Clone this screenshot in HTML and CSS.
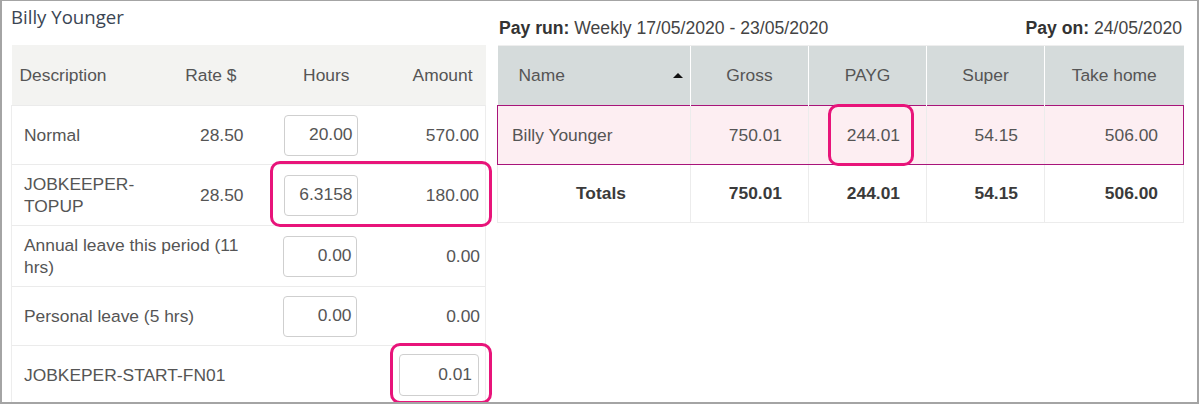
FILE: index.html
```html
<!DOCTYPE html>
<html>
<head>
<meta charset="utf-8">
<link rel="stylesheet" href="styles.css">
</head>
<body>
<div class="frame">
  <div class="left">
    <h1 class="title">Billy Younger</h1>
    <table class="earn">
      <colgroup><col class="c-desc"><col class="c-rate"><col class="c-hours"><col class="c-amt"></colgroup>
      <thead>
        <tr><th class="l">Description</th><th>Rate $</th><th>Hours</th><th>Amount</th></tr>
      </thead>
      <tbody>
        <tr><td class="l">Normal</td><td>28.50</td><td><input class="num" value="20.00"></td><td>570.00</td></tr>
        <tr class="two"><td class="l">JOBKEEPER-TOPUP</td><td>28.50</td><td><input class="num" value="6.3158"></td><td>180.00</td></tr>
        <tr class="two"><td class="l" colspan="2">Annual leave this period (11 hrs)</td><td><input class="num" value="0.00"></td><td>0.00</td></tr>
        <tr><td class="l" colspan="2">Personal leave (5 hrs)</td><td><input class="num" value="0.00"></td><td>0.00</td></tr>
        <tr><td class="l" colspan="3">JOBKEPER-START-FN01</td><td><input class="num wide" value="0.01"></td></tr>
      </tbody>
    </table>
  </div>
  <div class="right">
    <div class="payinfo">
      <span><b>Pay run:</b> Weekly 17/05/2020 - 23/05/2020</span>
      <span><b>Pay on:</b> 24/05/2020</span>
    </div>
    <table class="summary">
      <colgroup><col class="s-name"><col class="s-n"><col class="s-n"><col class="s-n"><col class="s-last"></colgroup>
      <thead>
        <tr><th class="name"><div class="namewrap"><span>Name</span><span class="sort"></span></div></th><th>Gross</th><th>PAYG</th><th>Super</th><th>Take home</th></tr>
      </thead>
      <tbody>
        <tr class="sel"><td class="name">Billy Younger</td><td>750.01</td><td>244.01</td><td>54.15</td><td>506.00</td></tr>
        <tr class="tot"><td class="name">Totals</td><td>750.01</td><td>244.01</td><td>54.15</td><td>506.00</td></tr>
      </tbody>
    </table>
  </div>
  <div class="mark m1"></div>
  <div class="mark m2"></div>
  <div class="mark m3"></div>
</div>
</body>
</html>
```
FILE: styles.css
```css
html, body { margin: 0; padding: 0; background: #fff; }
body { font-family: "Liberation Sans", Arial, sans-serif; font-size: 17.4px; color: #555; }

.frame {
  position: relative;
  width: 1199px;
  height: 404px;
  box-sizing: border-box;
  border: 2px solid #a4a4a4;
  border-top-width: 1px;
  padding: 0 14px 0 9px;
  display: flex;
  gap: 12px;
  overflow: hidden;
}

.left { width: 474px; flex: none; }
.right { width: 686px; flex: none; }

.title {
  margin: 0;
  height: 44px;
  box-sizing: border-box;
  padding-top: 4px;
  font-family: "Open Sans", sans-serif;
  font-weight: 400;
  font-size: 18.6px;
  line-height: 24px;
  color: #3a4553;
}

.earn {
  width: 474px;
  table-layout: fixed;
  border-collapse: collapse;
}
.c-desc { width: 159px; }
.c-rate { width: 79px; }
.c-hours { width: 113px; }
.c-amt { width: 123px; }

.earn th {
  height: 60px;
  padding: 0 13px 0 8px;
  background: #f3f3f1;
  font-weight: 400;
  text-align: right;
  color: #555;
}
.earn th.l { text-align: left; }
.earn td {
  height: 58px;
  padding: 0 6px 0 12px;
  text-align: right;
  border-top: 1px solid #ebebeb;
  line-height: 22px;
}
.earn td:nth-child(3) { padding-right: 5px; }
.earn td.l { text-align: left; border-left: 1px solid #ededed; }
.earn td:last-child { border-right: 1px solid #ededed; }
.earn tr.two td { height: 60px; }

.num {
  width: 74px;
  height: 41px;
  box-sizing: border-box;
  border: 1px solid #cfcfcf;
  border-radius: 4px;
  padding: 0 4px 2px;
  font-family: "Liberation Sans", Arial, sans-serif;
  font-size: 17.4px;
  color: #555;
  text-align: right;
  vertical-align: middle;
  background: #fff;
}
.num.wide { width: 80px; height: 42px; padding-right: 6px; }

.payinfo {
  height: 44px;
  box-sizing: border-box;
  padding: 17px 1px 0 2px;
  display: flex;
  justify-content: space-between;
  font-size: 17.6px;
  line-height: 20px;
  color: #444;
}
.payinfo b { color: #333; }

.summary {
  width: 686px;
  table-layout: fixed;
  border-collapse: collapse;
}
.s-name { width: 193px; }
.s-n { width: 118px; }
.s-last { width: 139px; }

.summary th {
  height: 59px;
  padding: 0;
  background: #d5dbdb;
  font-weight: 400;
  color: #555;
  text-align: center;
  border-left: 1px solid #fff;
  border-top: 1px solid #eee;
}
.summary th:first-child { border-left: 0; }
.namewrap {
  display: flex;
  align-items: center;
  justify-content: space-between;
  padding: 0 7px 0 21px;
}
.sort {
  width: 0;
  height: 0;
  border-left: 5px solid transparent;
  border-right: 5px solid transparent;
  border-bottom: 5px solid #111;
  margin-top: -1px;
}

.summary td {
  height: 58px;
  padding: 0 26px 0 0;
  text-align: right;
  border-left: 1px solid #ececec;
}
.summary td:first-child { border-left: 1px solid #ececec; }
.summary td:last-child { border-right: 1px solid #ececec; padding-right: 25px; }
.summary td.name { text-align: left; padding-left: 14px; }

.summary tr.sel td {
  background: #fdeef2;
  border-top: 1px solid #a8147a;
  border-bottom: 1px solid #a8147a;
}
.summary tr.sel td:first-child { border-left: 1px solid #a8147a; }
.summary tr.sel td:last-child { border-right: 1px solid #a8147a; }

.summary tr.tot td {
  font-weight: 700;
  color: #3a3a3a;
  height: 57px;
  border-bottom: 1px solid #ececec;
}
.summary tr.tot td.name { text-align: center; padding: 0 0 0 14px; }

.mark {
  position: absolute;
  box-sizing: border-box;
  border: 3px solid #e8147a;
  border-radius: 10px;
}
.m1 { left: 268px; top: 160px; width: 222px; height: 66px; }
.m2 { left: 388px; top: 342px; width: 102px; height: 61px; }
.m3 { left: 826px; top: 103px; width: 86px; height: 62px; }
```
